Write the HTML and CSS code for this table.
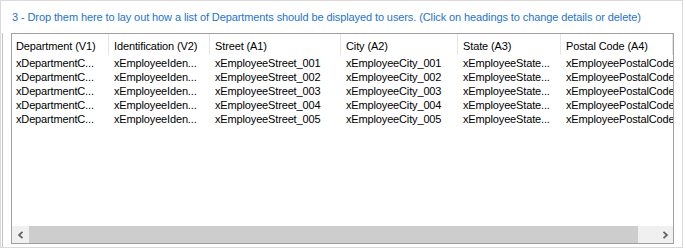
FILE: index.html
```html
<!DOCTYPE html>
<html>
<head>
<meta charset="utf-8">
<link rel="stylesheet" href="styles.css">
</head>
<body>
<div class="panel">
  <div class="hint">3 - Drop them here to lay out how a list of Departments should be displayed to users. (Click on headings to change details or delete)</div>
  <div class="body">
    <div class="listbox">
      <div class="grid">
        <div class="row head">
          <div class="cell c1">Department (V1)</div>
          <div class="cell c2">Identification (V2)</div>
          <div class="cell c3">Street (A1)</div>
          <div class="cell c4">City (A2)</div>
          <div class="cell c5">State (A3)</div>
          <div class="cell c6">Postal Code (A4)</div>
        </div>
        <div class="row data">
          <div class="cell c1">xDepartmentC...</div>
          <div class="cell c2">xEmployeeIden...</div>
          <div class="cell c3">xEmployeeStreet_001</div>
          <div class="cell c4">xEmployeeCity_001</div>
          <div class="cell c5">xEmployeeState...</div>
          <div class="cell c6">xEmployeePostalCode</div>
        </div>
        <div class="row data">
          <div class="cell c1">xDepartmentC...</div>
          <div class="cell c2">xEmployeeIden...</div>
          <div class="cell c3">xEmployeeStreet_002</div>
          <div class="cell c4">xEmployeeCity_002</div>
          <div class="cell c5">xEmployeeState...</div>
          <div class="cell c6">xEmployeePostalCode</div>
        </div>
        <div class="row data">
          <div class="cell c1">xDepartmentC...</div>
          <div class="cell c2">xEmployeeIden...</div>
          <div class="cell c3">xEmployeeStreet_003</div>
          <div class="cell c4">xEmployeeCity_003</div>
          <div class="cell c5">xEmployeeState...</div>
          <div class="cell c6">xEmployeePostalCode</div>
        </div>
        <div class="row data">
          <div class="cell c1">xDepartmentC...</div>
          <div class="cell c2">xEmployeeIden...</div>
          <div class="cell c3">xEmployeeStreet_004</div>
          <div class="cell c4">xEmployeeCity_004</div>
          <div class="cell c5">xEmployeeState...</div>
          <div class="cell c6">xEmployeePostalCode</div>
        </div>
        <div class="row data">
          <div class="cell c1">xDepartmentC...</div>
          <div class="cell c2">xEmployeeIden...</div>
          <div class="cell c3">xEmployeeStreet_005</div>
          <div class="cell c4">xEmployeeCity_005</div>
          <div class="cell c5">xEmployeeState...</div>
          <div class="cell c6">xEmployeePostalCode</div>
        </div>
      </div>
      <div class="hscroll">
        <div class="sbtn"><svg width="8" height="8" viewBox="0 0 8 8"><polyline points="5.5,0.8 2,4 5.5,7.2" fill="none" stroke="#606060" stroke-width="1.7"/></svg></div>
        <div class="thumb"></div>
        <div class="track"></div>
        <div class="sbtn"><svg width="8" height="8" viewBox="0 0 8 8"><polyline points="2.5,0.8 6,4 2.5,7.2" fill="none" stroke="#606060" stroke-width="1.7"/></svg></div>
      </div>
    </div>
  </div>
</div>
</body>
</html>
```

FILE: styles.css
```css
html, body {
  margin: 0;
  padding: 0;
  background: #ffffff;
}

body {
  font-family: "Liberation Sans", Arial, sans-serif;
  font-size: 11px;
  letter-spacing: -0.12px;
  color: #000;
}

.panel {
  box-sizing: border-box;
  width: 683px;
  height: 248px;
  border: 1px solid #dadada;
  display: flex;
  flex-direction: column;
}

.hint {
  height: 32px;
  line-height: 32px;
  padding-left: 11px;
  color: #1e73d0;
  letter-spacing: -0.1px;
  white-space: nowrap;
  overflow: hidden;
}

.body {
  flex: 1;
  margin-left: 1px;
  border-left: 1px solid #c4c4c4;
  padding-left: 8px;
}

.listbox {
  box-sizing: border-box;
  width: 663px;
  height: 211px;
  border: 1px solid #a0a0a0;
  display: flex;
  flex-direction: column;
  overflow: hidden;
}

.grid {
  flex: 1;
  overflow: hidden;
}

.row {
  display: flex;
  white-space: nowrap;
}

.cell {
  box-sizing: border-box;
  flex: none;
  padding-left: 5px;
  overflow: hidden;
}

.c1 { width: 97px; padding-left: 4px; }
.c2 { width: 101px; }
.c3 { width: 131px; }
.c4 { width: 117px; }
.c5 { width: 103px; }
.c6 { width: 112px; }

.head {
  height: 21px;
}

.head .cell {
  border-right: 1px solid #e5e5e5;
  padding-top: 4px;
  line-height: 17px;
}

.data {
  height: 14px;
  line-height: 16px;
  letter-spacing: -0.15px;
}

.hscroll {
  height: 17px;
  display: flex;
  background: #f0f0f0;
}

.sbtn {
  width: 17px;
  height: 17px;
  display: flex;
  align-items: center;
  justify-content: center;
  flex: none;
}

.thumb {
  width: 609px;
  background: #cdcdcd;
  flex: none;
}

.track {
  flex: 1;
}
```
